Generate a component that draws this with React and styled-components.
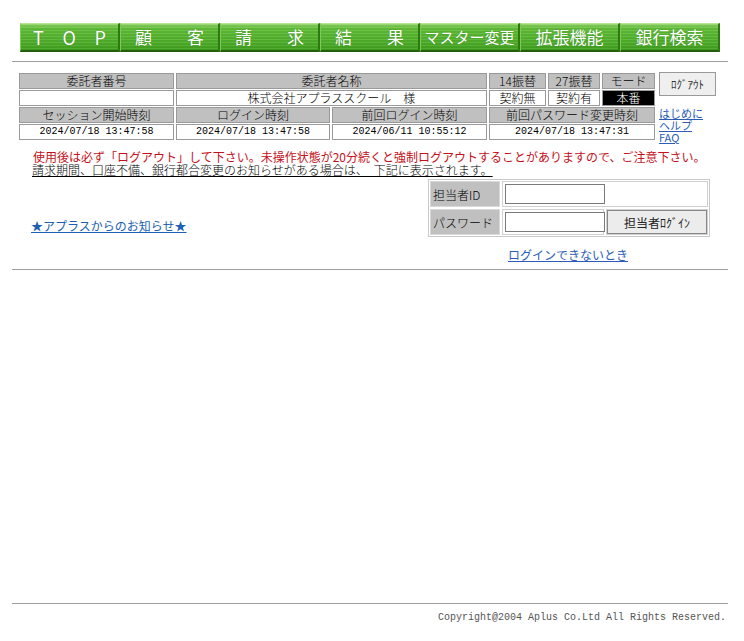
import React from "react";
import styled, { createGlobalStyle } from "styled-components";

const GlobalStyle = createGlobalStyle`
  html, body { margin: 0; padding: 0; background: #fff; }
  body {
    font-family: "Noto Sans CJK JP", "Noto Sans", sans-serif;
    font-size: 12px;
    font-weight: 300;
    color: #000;
  }
`;

const Page = styled.div`
  width: 716px;
  margin-left: 12px;
`;

const NavBar = styled.div`
  display: flex;
  margin: 23px 0 0 8px;
`;

const NavButton = styled.div`
  width: 100px;
  height: 29px;
  box-sizing: border-box;
  display: flex;
  align-items: center;
  justify-content: ${(p) => (p.$spread ? "space-between" : "center")};
  padding: 0 ${(p) => p.$pad || 0}px 1px;
  color: #fff;
  font-size: ${(p) => p.$size || 17}px;
  font-weight: 400;
  background:
    repeating-linear-gradient(180deg, rgba(255,255,255,0.08) 0 1px, rgba(0,0,0,0.05) 1px 3px),
    linear-gradient(180deg, #92d66a 0%, #62bf38 18%, #4fb02a 70%, #40a01e 100%);
  border-top: 1px solid #b5e796;
  border-bottom: 2px solid #225f0c;
  border-right: 2px solid #2f7814;
  border-left: 1px solid #7ccb52;
  text-shadow: 0 0 1px rgba(0,60,0,0.4);
`;

const Rule = styled.hr`
  border: 0;
  border-top: 1px solid #a0a0a0;
  margin: ${(p) => p.$top || 0}px 0 0;
`;

const InfoRow = styled.div`
  display: flex;
  gap: 3px;
  margin: 10px 0 0 6px;
`;

const InfoGrid = styled.div`
  display: grid;
  grid-template-columns: 155px 154px 155px 57px 52px 53px;
  grid-auto-rows: 16px;
  gap: 1px 2px;
  padding: 1px;
`;

const Cell = styled.div`
  grid-column: span ${(p) => p.$span || 1};
  box-sizing: border-box;
  border: 1px solid #9a9a9a;
  background: ${(p) => (p.$dark ? "#000" : p.$head ? "#c0c0c0" : "#fff")};
  color: ${(p) => (p.$dark ? "#fff" : "#000")};
  line-height: 14px;
  text-align: center;
  white-space: nowrap;
  font-family: ${(p) => (p.$mono ? '"Liberation Mono", "DejaVu Sans Mono", monospace' : "inherit")};
  font-size: ${(p) => (p.$mono ? "10px" : "12px")};
`;

const SideCol = styled.div`
  display: flex;
  flex-direction: column;
`;

const SmallButton = styled.button`
  width: 57px;
  height: 24px;
  padding: 0;
  background: #efefef;
  border: 1px solid #999;
  font-family: "Noto Sans CJK JP", sans-serif;
  font-size: 11px;
  color: #333;
  margin-bottom: 11px;
`;

const SideLink = styled.a`
  display: block;
  color: #2a5cb8;
  text-decoration: underline;
  font-size: 11px;
  font-weight: 400;
  line-height: 12px;
`;

const Warning = styled.p`
  margin: 7px 0 0 21px;
  color: #c4101a;
  font-size: 12px;
  font-weight: 400;
  line-height: 13px;
`;

const NoticeLine = styled.p`
  margin: 0 0 0 20px;
  font-size: 12px;
  line-height: 13px;
  text-decoration: underline;
`;

const MidRow = styled.div`
  display: flex;
  justify-content: space-between;
  margin: 3px 0 0 0;
`;

const NewsLink = styled.a`
  margin: 38px 0 0 19px;
  color: #1d5fb0;
  text-decoration: underline;
  font-size: 12px;
  font-weight: 400;
  align-self: flex-start;
`;

const LoginGrid = styled.div`
  display: grid;
  grid-template-columns: 70px 102px 102px;
  grid-auto-rows: 26px;
  gap: 2px;
  padding: 1px;
  border: 1px solid #c8c8c8;
  margin-right: 18px;
  width: 282px;
  box-sizing: border-box;
`;

const LoginLabel = styled.div`
  background: #c0c0c0;
  border: 1px solid #d8d8d8;
  display: flex;
  align-items: center;
  padding-left: 2px;
  font-size: 12px;
`;

const LoginCell = styled.div`
  grid-column: span ${(p) => p.$span || 1};
  border: 1px solid #d0d0d0;
  display: flex;
  align-items: center;
  padding-left: 2px;
`;

const TextBox = styled.input`
  width: 100px;
  height: 20px;
  box-sizing: border-box;
  border: 1px solid #7a7a7a;
  padding: 0;
`;

const LoginButton = styled.button`
  width: 101px;
  height: 24px;
  margin-left: -2px;
  background: #ececec;
  border: 1px solid #888;
  font-family: "Noto Sans CJK JP", sans-serif;
  font-size: 12px;
  color: #222;
  padding: 0;
`;

const CantLogin = styled.a`
  display: block;
  margin: 11px 0 0 496px;
  color: #2a5cb8;
  text-decoration: underline;
  font-size: 12px;
  font-weight: 400;
  line-height: 14px;
`;

const Copyright = styled.div`
  text-align: right;
  margin: 8px 2px 0 0;
  font-family: "Liberation Mono", "DejaVu Sans Mono", monospace;
  font-size: 10px;
  color: #555;
`;

const navItems = [
  { label: "TOP", spread: true, pad: 12, size: 18 },
  { label: "顧客", spread: true, pad: 14 },
  { label: "請求", spread: true, pad: 14 },
  { label: "結果", spread: true, pad: 14 },
  { label: "マスター変更", size: 15 },
  { label: "拡張機能", size: 17 },
  { label: "銀行検索", size: 17 },
];

export default function App() {
  return (
    <Page>
      <GlobalStyle />
      <NavBar>
        {navItems.map((n) => (
          <NavButton key={n.label} $spread={n.spread} $pad={n.pad} $size={n.size}>
            {n.spread ? n.label.split("").map((c) => <span key={c}>{c}</span>) : n.label}
          </NavButton>
        ))}
      </NavBar>

      <Rule $top={9} />

      <InfoRow>
        <InfoGrid>
          <Cell $head>委託者番号</Cell>
          <Cell $head $span={2}>委託者名称</Cell>
          <Cell $head>14振替</Cell>
          <Cell $head>27振替</Cell>
          <Cell $head>モード</Cell>

          <Cell />
          <Cell $span={2}>株式会社アプラススクール　様</Cell>
          <Cell>契約無</Cell>
          <Cell>契約有</Cell>
          <Cell $dark>本番</Cell>

          <Cell $head>セッション開始時刻</Cell>
          <Cell $head>ログイン時刻</Cell>
          <Cell $head>前回ログイン時刻</Cell>
          <Cell $head $span={3}>前回パスワード変更時刻</Cell>

          <Cell $mono>2024/07/18 13:47:58</Cell>
          <Cell $mono>2024/07/18 13:47:58</Cell>
          <Cell $mono>2024/06/11 10:55:12</Cell>
          <Cell $mono $span={3}>2024/07/18 13:47:31</Cell>
        </InfoGrid>
        <SideCol>
          <SmallButton>ﾛｸﾞｱｳﾄ</SmallButton>
          <SideLink href="#">はじめに</SideLink>
          <SideLink href="#">ヘルプ</SideLink>
          <SideLink href="#">FAQ</SideLink>
        </SideCol>
      </InfoRow>

      <Warning>
        使用後は必ず「ログアウト」して下さい。未操作状態が20分続くと強制ログアウトすることがありますので、ご注意下さい。
      </Warning>
      <NoticeLine>請求期間、口座不備、銀行都合変更のお知らせがある場合は、　下記に表示されます。</NoticeLine>

      <MidRow>
        <NewsLink href="#">★アプラスからのお知らせ★</NewsLink>
        <LoginGrid>
          <LoginLabel>担当者ID</LoginLabel>
          <LoginCell $span={2}>
            <TextBox type="text" />
          </LoginCell>
          <LoginLabel>パスワード</LoginLabel>
          <LoginCell>
            <TextBox type="password" />
          </LoginCell>
          <LoginCell>
            <LoginButton>担当者ﾛｸﾞｲﾝ</LoginButton>
          </LoginCell>
        </LoginGrid>
      </MidRow>

      <CantLogin href="#">ログインできないとき</CantLogin>

      <Rule $top={7} />

      <Rule $top={333} />
      <Copyright>Copyright@2004 Aplus Co.Ltd All Rights Reserved.</Copyright>
    </Page>
  );
}
